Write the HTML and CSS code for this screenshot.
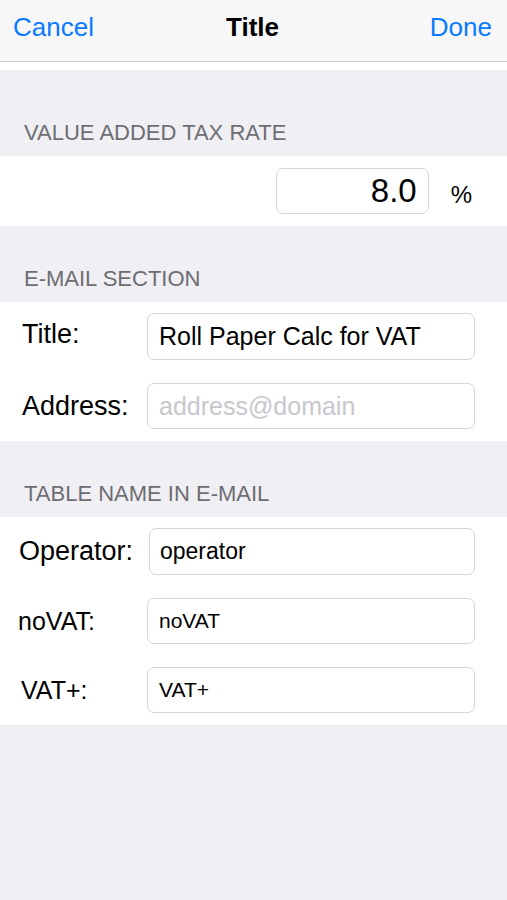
FILE: index.html
```html
<!DOCTYPE html>
<html lang="en">
<head>
    <meta charset="UTF-8">
    <meta name="viewport" content="width=device-width, initial-scale=1.0">
    <title>Title</title>
    <link rel="stylesheet" href="styles.css">
</head>
<body>

<div class="navbar">
    <span class="nav-button">Cancel</span>
    <span class="nav-title">Title</span>
    <span class="nav-button nav-right">Done</span>
</div>
<div class="nav-gap"></div>

<div class="section-header first">VALUE ADDED TAX RATE</div>
<div class="section tax">
    <div class="field rate">8.0</div>
    <span class="percent">%</span>
</div>

<div class="section-header">E-MAIL SECTION</div>
<div class="section">
    <div class="row">
        <span class="label label-title">Title:</span>
        <div class="field">Roll Paper Calc for VAT</div>
    </div>
    <div class="row">
        <span class="label">Address:</span>
        <div class="field placeholder">address@domain</div>
    </div>
</div>

<div class="section-header">TABLE NAME IN E-MAIL</div>
<div class="section">
    <div class="row">
        <span class="label label-operator">Operator:</span>
        <div class="field field-operator">operator</div>
    </div>
    <div class="row">
        <span class="label label-small label-novat">noVAT:</span>
        <div class="field field-small">noVAT</div>
    </div>
    <div class="row">
        <span class="label label-small label-vat">VAT+:</span>
        <div class="field field-small">VAT+</div>
    </div>
</div>

</body>
</html>
```

FILE: styles.css
```css
body {
    margin: 0;
    font-family: 'Liberation Sans', Arial, sans-serif;
    background-color: #efeff4;
    color: #000;
    min-height: 900px;
}
.navbar {
    height: 62px;
    box-sizing: border-box;
    background-color: #f7f7f8;
    border-bottom: 1px solid #c8c7cc;
    display: grid;
    grid-template-columns: 1fr auto 1fr;
    align-items: center;
    padding: 0 15px 6px 13px;
    font-size: 26px;
}
.nav-button {
    color: #0a7aff;
}
.nav-right {
    text-align: right;
}
.nav-title {
    font-weight: bold;
}
.nav-gap {
    height: 8px;
    background-color: #fff;
}
.section-header {
    height: 76px;
    box-sizing: border-box;
    display: flex;
    align-items: flex-end;
    padding: 0 0 10px 24px;
    font-size: 22px;
    color: #6d6d72;
}
.section-header.first {
    height: 86px;
}
.section {
    background-color: #fff;
    padding: 11px 32px 12px 0;
    display: flex;
    flex-direction: column;
    gap: 23px;
}
.section.tax {
    flex-direction: row;
    justify-content: flex-end;
    align-items: center;
    padding: 12px 35px 12px 0;
    gap: 0;
}
.row {
    display: flex;
    align-items: center;
}
.label {
    flex: 1;
    padding-left: 22px;
    font-size: 27px;
}
.label-title {
    margin-top: -5px;
}
.label-operator {
    padding-left: 19px;
}
.label-small {
    font-size: 25px;
}
.label-novat {
    padding-left: 18px;
}
.label-vat {
    padding-left: 21px;
}
.field {
    width: 328px;
    height: 47px;
    box-sizing: border-box;
    border: 1px solid #d6d6d6;
    border-radius: 7px;
    padding: 0 11px;
    display: flex;
    align-items: center;
    font-size: 25px;
}
.field.placeholder {
    color: #c7c7cd;
    height: 46px;
}
.field-operator {
    width: 326px;
    font-size: 23px;
    padding-left: 10px;
}
.field-small {
    font-size: 21px;
    height: 46px;
}
.field.rate {
    width: 153px;
    height: 46px;
    justify-content: flex-end;
    font-size: 33px;
}
.percent {
    font-size: 24px;
    margin-left: 22px;
    margin-top: 8px;
}
```
